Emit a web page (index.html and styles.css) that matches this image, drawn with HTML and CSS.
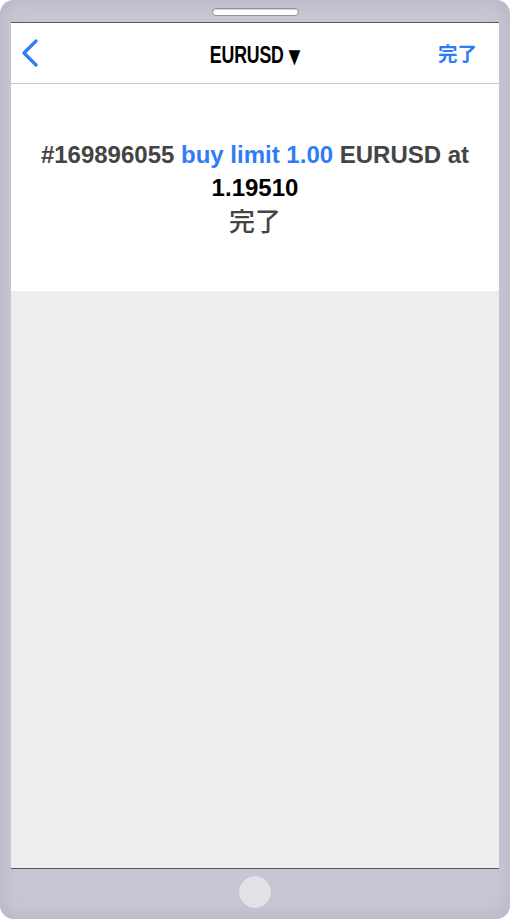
FILE: index.html
```html
<!DOCTYPE html>
<html lang="ja">
<head>
<meta charset="utf-8">
<link rel="stylesheet" href="styles.css">
</head>
<body>
<div class="device">
  <div class="top-bezel"><div class="speaker"></div></div>
  <div class="screen">
    <div class="navbar">
      <svg class="back" width="20" height="30" viewBox="0 0 20 30"><polyline points="14,2 2,14 14,26" fill="none" stroke="#2f7cf6" stroke-width="3.2" stroke-linecap="round" stroke-linejoin="round"/></svg>
      <div class="title">EURUSD <span class="tri">▼</span></div>
      <div class="done">完了</div>
    </div>
    <div class="message">
      <p class="line"><span class="gray">#169896055 </span><span class="blue">buy limit 1.00 </span><span class="gray">EURUSD at</span></p>
      <p class="line black">1.19510</p>
      <p class="line jp">完了</p>
    </div>
    <div class="empty"></div>
  </div>
  <div class="bottom-bezel"><div class="home"></div></div>
</div>
</body>
</html>
```
FILE: styles.css
```css
html, body { margin: 0; padding: 0; background: #ffffff; }
body { width: 510px; height: 919px; overflow: hidden; font-family: "Liberation Sans", Arial, "Noto Sans CJK JP", sans-serif; }
.device {
  width: 510px; height: 919px; box-sizing: border-box;
  background: #c7c7d4; border-radius: 14px;
  box-shadow: inset 0 0 22px #b3b2c5;
  display: flex; flex-direction: column; padding: 0 11px;
}
.top-bezel { height: 22px; display: flex; justify-content: center; align-items: flex-start; }
.speaker {
  margin-top: 8px; width: 85px; height: 6px; border-radius: 4px;
  background: #ffffff; border: 1px solid #8f8f99; box-shadow: inset 0 1px 1px #d0d0d8;
}
.screen {
  flex: 1; display: flex; flex-direction: column;
  border-top: 1px solid #55555c; border-bottom: 1px solid #55555c; background: #ededed;
}
.navbar {
  height: 60px; background: #fff; border-bottom: 1px solid #c8c8c8;
  display: flex; align-items: center; position: relative;
}
.back { margin-left: 11px; margin-top: 2px; }
.title {
  position: absolute; left: 0; right: 0; text-align: center; top: 19px;
  font-weight: bold; font-size: 23px; color: #000; letter-spacing: -0.2px;
  transform: scaleX(0.77);
}
.tri { font-family: "DejaVu Sans", sans-serif; font-size: 20px; }
.done {
  margin-left: auto; margin-right: 22px; color: #2f7cf6;
  font-family: "Noto Sans CJK JP", sans-serif; font-weight: 700; font-size: 19.5px; margin-top: -2px;
}
.message { background: #fff; height: 207px; box-sizing: border-box; padding-top: 54px; text-align: center; }
.line { margin: 0; font-weight: bold; font-size: 24px; line-height: 33px; color: #444; }
.gray { color: #444; }
.blue { color: #2f7cf6; }
.black { color: #000; }
.jp { font-family: "Noto Sans CJK JP", sans-serif; font-weight: 500; font-size: 26px; color: #444; line-height: 32px; }
.empty { flex: 1; background: #ededed; }
.bottom-bezel { height: 50px; display: flex; justify-content: center; }
.home { margin-top: 7px; width: 32px; height: 32px; border-radius: 50%; background: #e1e1e8; box-shadow: 0 0 1px #b8b8c4; }
```
